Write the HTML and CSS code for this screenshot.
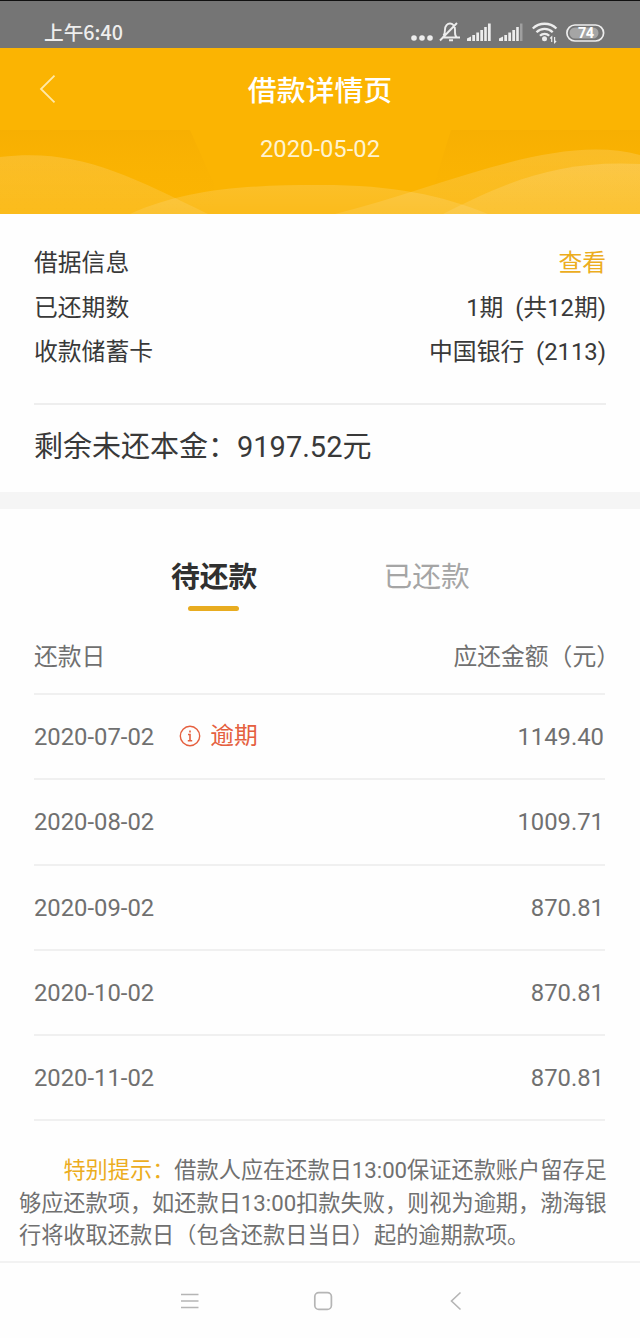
FILE: index.html
```html
<!DOCTYPE html>
<html lang="zh-CN">
<head>
<meta charset="utf-8">
<title>借款详情页</title>
<link rel="stylesheet" href="styles.css">
</head>
<body>
<div class="status">
  <span class="clock">上午6:40</span>
  <svg class="status-icons" width="200" height="28" viewBox="0 0 200 28" fill="none" stroke="#ededed">
    <g fill="#ededed" stroke="none">
      <circle cx="5" cy="20" r="2.8"/><circle cx="13" cy="20" r="2.8"/><circle cx="21" cy="20" r="2.8"/>
    </g>
    <path d="M33 19.5h18M34.5 17.5c1.500-2 1.500-4 1.500-6 0-3.500 2.500-6 5-6s5 2.500 5 6v3c0 2.500.5 4 2 5M31 22.500 48 5M40 22.200h4" stroke-width="1.900"/>
    <g fill="#ededed" stroke="none">
      <path d="M58 20.500l4-2v4.500h-4zM63.300 17h2.700v6h-2.700zM67.300 14.500h2.700v8.500h-2.700zM71.300 12h2.700v11h-2.700zM75.200 9h2.600v14h-2.600zM79 5.500h2.700v17.500h-2.700z"/>
      <path d="M90 20.500l4-2v4.500h-4zM95.300 17h2.700v6h-2.700zM99.300 14.500h2.700v8.500h-2.700zM103.300 12h2.700v11h-2.700zM107.200 9h2.600v14h-2.600z"/>
      <path d="M111 5.500h2.500v17.500h-2.500z" opacity=".35"/>
      <circle cx="135.500" cy="20.700" r="2.500"/>
    </g>
    <path d="M123.800 10.500a17 17 0 0 1 23.600 0M127.500 14.200a11.500 11.500 0 0 1 16.200 0M131 17.700a6.500 6.500 0 0 1 9.200 0" stroke-width="2.300"/>
    <path d="M142.700 24v-5l-1.500 1.500M145.600 19v5.500l1.500-1.500" stroke-width="1.200"/>
    <rect x="157.900" y="7" width="36.700" height="16" rx="8" stroke-width="1.700"/>
    <rect x="160.500" y="9.500" width="29" height="11" rx="5.500" fill="#a5a5a5" stroke="none"/>
    <text class="battery" x="176.700" y="20.300" text-anchor="middle">74</text>
  </svg>
</div>

<header class="hero">
  <svg class="waves" width="640" height="166" viewBox="0 0 640 166">
    <defs>
      <linearGradient id="shade" x1="0" y1="0" x2="0" y2="1">
        <stop offset="0" stop-color="#f5ad02" stop-opacity=".7"/>
        <stop offset="1" stop-color="#fbb403" stop-opacity="0"/>
      </linearGradient>
      <linearGradient id="wave" x1="0" y1="0" x2="0" y2="1">
        <stop offset="0" stop-color="#fff" stop-opacity=".15"/>
        <stop offset="1" stop-color="#fff" stop-opacity=".1"/>
      </linearGradient>
    </defs>
    <path d="M0 82H190L214 136V166H0zM451 82H640V166H425z" fill="url(#shade)"/>
    <path d="M0 109C75 100 125 125 208 166H0z" fill="url(#wave)"/>
    <path d="M130 166C185 141 245 137 320 137S440 147 488 166z" fill="url(#wave)"/>
    <path d="M335 166C440 140 555 84 640 107V166z" fill="url(#wave)"/>
    <path d="M443 166C510 132 560 112 640 116V166z" fill="url(#wave)"/>
  </svg>
  <div class="titlebar">
    <svg class="back" width="20" height="30" viewBox="0 0 20 30" fill="none" stroke="#ffe9a8" stroke-width="1.800"><path d="M15.500 1.700 2 15 15.500 28.300"/></svg>
    <h1 class="title">借款详情页</h1>
  </div>
  <div class="hero-date">2020-05-02</div>
</header>

<section class="summary">
  <div class="info"><span>借据信息</span><a class="link">查看</a></div>
  <div class="info"><span>已还期数</span><span>1期&nbsp; (共12期)</span></div>
  <div class="info"><span>收款储蓄卡</span><span>中国银行&nbsp; (2113)</span></div>
  <div class="principal">剩余未还本金：9197.52元</div>
</section>

<section class="plan">
  <nav class="tabs">
    <div class="tab active">待还款</div>
    <div class="tab">已还款</div>
  </nav>
  <div class="row head"><span>还款日</span><span class="due">应还金额（元）</span></div>
  <div class="row"><span>2020-07-02</span>
    <span class="overdue"><svg width="22" height="22" viewBox="0 0 22 22" fill="none" stroke="#e5603f" stroke-width="1.400"><circle cx="11" cy="11" r="9.700"/><path d="M9 9.500h2v6M8.800 15.700h4.400M11 5.500v2" stroke-width="1.600"/></svg>逾期</span>
    <span class="amount">1149.40</span></div>
  <div class="row"><span>2020-08-02</span><span class="amount">1009.71</span></div>
  <div class="row"><span>2020-09-02</span><span class="amount">870.81</span></div>
  <div class="row"><span>2020-10-02</span><span class="amount">870.81</span></div>
  <div class="row"><span>2020-11-02</span><span class="amount">870.81</span></div>
</section>

<p class="notice"><span class="tip">特别提示：</span>借款人应在还款日13:00保证还款账户留存足<br>够应还款项，如还款日13:00扣款失败，则视为逾期，渤海银<br>行将收取还款日（包含还款日当日）起的逾期款项。</p>

<footer class="navbar">
  <svg width="20" height="20" viewBox="0 0 20 20" fill="none" stroke="#b5b5b5" stroke-width="1.600"><path d="M1 3.500h17.500M1 10h17.500M1 16.500h17.500"/></svg>
  <svg width="20" height="20" viewBox="0 0 20 20" fill="none" stroke="#b5b5b5" stroke-width="1.700"><rect x="1.800" y="1.600" width="16.600" height="16.800" rx="4"/></svg>
  <svg width="20" height="20" viewBox="0 0 20 20" fill="none" stroke="#b5b5b5" stroke-width="1.600"><path d="M14.500 1.500 5.500 10l9 8.500"/></svg>
</footer>
</body>
</html>
```
FILE: styles.css
```css
* { box-sizing: border-box; }
body {
  margin: 0;
  width: 640px;
  height: 1338px;
  overflow: hidden;
  display: flex;
  flex-direction: column;
  background: #fefefe;
  color: #393939;
  font-family: Roboto, "Noto Sans CJK SC", sans-serif;
  font-size: 23.8px;
  white-space: nowrap;
  text-spacing-trim: space-all;
}
.status {
  flex: none;
  height: 48px;
  padding: 17px 30px 0 44px;
  border-top: 1px solid #111;
  background: #757575;
  color: #eee;
  display: flex;
  justify-content: space-between;
}
.clock {
  font: 500 19.7px/28px "Noto Sans CJK SC", sans-serif;
}
.status-icons {
  flex: none;
  margin-right: 1.5px;
}
.battery {
  font: bold 14.5px Roboto, sans-serif;
  letter-spacing: -0.5px;
  fill: #fff;
  stroke: none;
}
.hero {
  flex: none;
  position: relative;
  height: 166px;
  background: #fbb402;
  color: #fff;
  text-align: center;
}
.waves { position: absolute; inset: 0; }
.titlebar {
  position: relative;
  display: grid;
  grid-template-columns: 80px 1fr 80px;
  align-items: center;
  height: 82px;
}
.back { margin-left: 39px; }
.title {
  margin: 4px 0 0;
  font-size: 28.9px;
  font-weight: 500;
  line-height: 40px;
}
.hero-date {
  position: relative;
  color: #fff3d0;
  line-height: 38px;
}
.summary {
  flex: none;
  height: 278px;
  padding: 27px 34px 0;
}
.info {
  display: flex;
  justify-content: space-between;
  line-height: 44.5px;
}
.link { color: #ecad1e; }
.principal {
  margin-top: 28px;
  border-top: 2px solid #eee;
  font-size: 29px;
  line-height: 84px;
}
.plan {
  flex: none;
  border-top: 17px solid #f5f5f5;
  padding: 0 35px 0 34px;
  color: #707070;
}
.tabs {
  display: flex;
  gap: 126px;
  height: 108px;
  padding: 46px 0 0 137px;
  font-size: 28.8px;
  line-height: 44px;
}
.tab { color: #a5a5a5; }
.active { color: #303030; font-weight: 700; }
.active::after {
  content: "";
  display: block;
  width: 51px;
  height: 5px;
  margin: 7px 0 0 17px;
  border-radius: 3px;
  background: #e8ac20;
}
.row {
  display: flex;
  align-items: center;
  height: 85.3px;
  padding-top: 1px;
  border-bottom: 2px solid #f0f0f0;
}
.head {
  height: 78px;
  padding: 0 0 2px;
  justify-content: space-between;
}
.due { margin-right: -15px; }
.amount { margin-left: auto; padding-right: 1px; }
.overdue {
  display: flex;
  align-items: center;
  gap: 9px;
  margin-left: 25px;
  color: #e5603f;
  line-height: 30px;
  margin-top: -2px;
}
.notice {
  flex: none;
  margin: 33px 0 0 19px;
  color: #707070;
  font-size: 22.2px;
  line-height: 32.2px;
  text-indent: 2em;
}
.tip { color: #ecad1e; }
.navbar {
  margin-top: auto;
  flex: none;
  height: 77px;
  padding: 1px 174px 0 180px;
  border-top: 2px solid #f2f2f2;
  display: flex;
  justify-content: space-between;
  align-items: center;
}
```
